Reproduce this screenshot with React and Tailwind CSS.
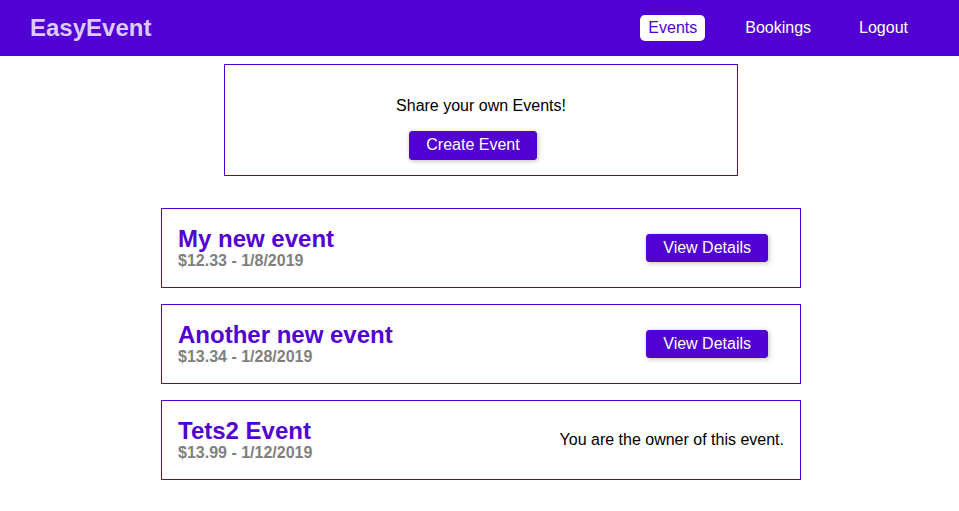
import React from "react";

const events = [
  { id: 1, title: "My new event", price: "$12.33", date: "1/8/2019", owner: false },
  { id: 2, title: "Another new event", price: "$13.34", date: "1/28/2019", owner: false },
  { id: 3, title: "Tets2 Event", price: "$13.99", date: "1/12/2019", owner: true },
];

function Btn({ children }) {
  return (
    <button className="mr-4 px-4 py-1 bg-[#5101d1] border border-[#5101d1] text-white text-base rounded-[3px] shadow-[1px_1px_5px_rgba(0,0,0,0.26)] leading-[1.15]">
      {children}
    </button>
  );
}

export default function App() {
  return (
    <div className="min-h-[511px] bg-white font-['Liberation_Sans',Arial,sans-serif] text-black">
      {/* Header */}
      <header className="h-14 bg-[#5101d1] flex items-center justify-between pl-[30px] pr-[43px]">
        <h1 className="text-2xl font-bold text-[#dccaff] leading-none">EasyEvent</h1>
        <nav>
          <ul className="flex items-center gap-8 text-base">
            <li>
              <a className="block px-2 py-[3px] bg-white text-[#5101d1] rounded-[5px] leading-[1.2]">Events</a>
            </li>
            <li>
              <a className="block px-2 py-[3px] text-white leading-[1.2]">Bookings</a>
            </li>
            <li>
              <a className="block px-2 py-[3px] text-white leading-[1.2]">Logout</a>
            </li>
          </ul>
        </nav>
      </header>

      <main className="pl-[3px]">
        {/* Create event box */}
        <div className="w-[514px] mx-auto mt-2 px-4 pt-4 pb-[15px] border border-[#5101d1] text-center">
          <p className="my-4 text-base leading-[1.15]">Share your own Events!</p>
          <Btn>Create Event</Btn>
        </div>

        {/* Events list */}
        <ul className="w-[640px] mx-auto mt-8 flex flex-col gap-4">
          {events.map((ev) => (
            <li
              key={ev.id}
              className="h-20 px-4 border border-[#5101d1] flex items-center justify-between"
            >
              <div>
                <h1 className="text-2xl font-bold text-[#5101d1] leading-[1.15]">{ev.title}</h1>
                <h2 className="text-base font-bold text-[#7f7f7f] leading-[1.15]">
                  {ev.price} - {ev.date}
                </h2>
              </div>
              <div>
                {ev.owner ? (
                  <p className="text-base leading-[1.15]">You are the owner of this event.</p>
                ) : (
                  <Btn>View Details</Btn>
                )}
              </div>
            </li>
          ))}
        </ul>
      </main>
    </div>
  );
}
